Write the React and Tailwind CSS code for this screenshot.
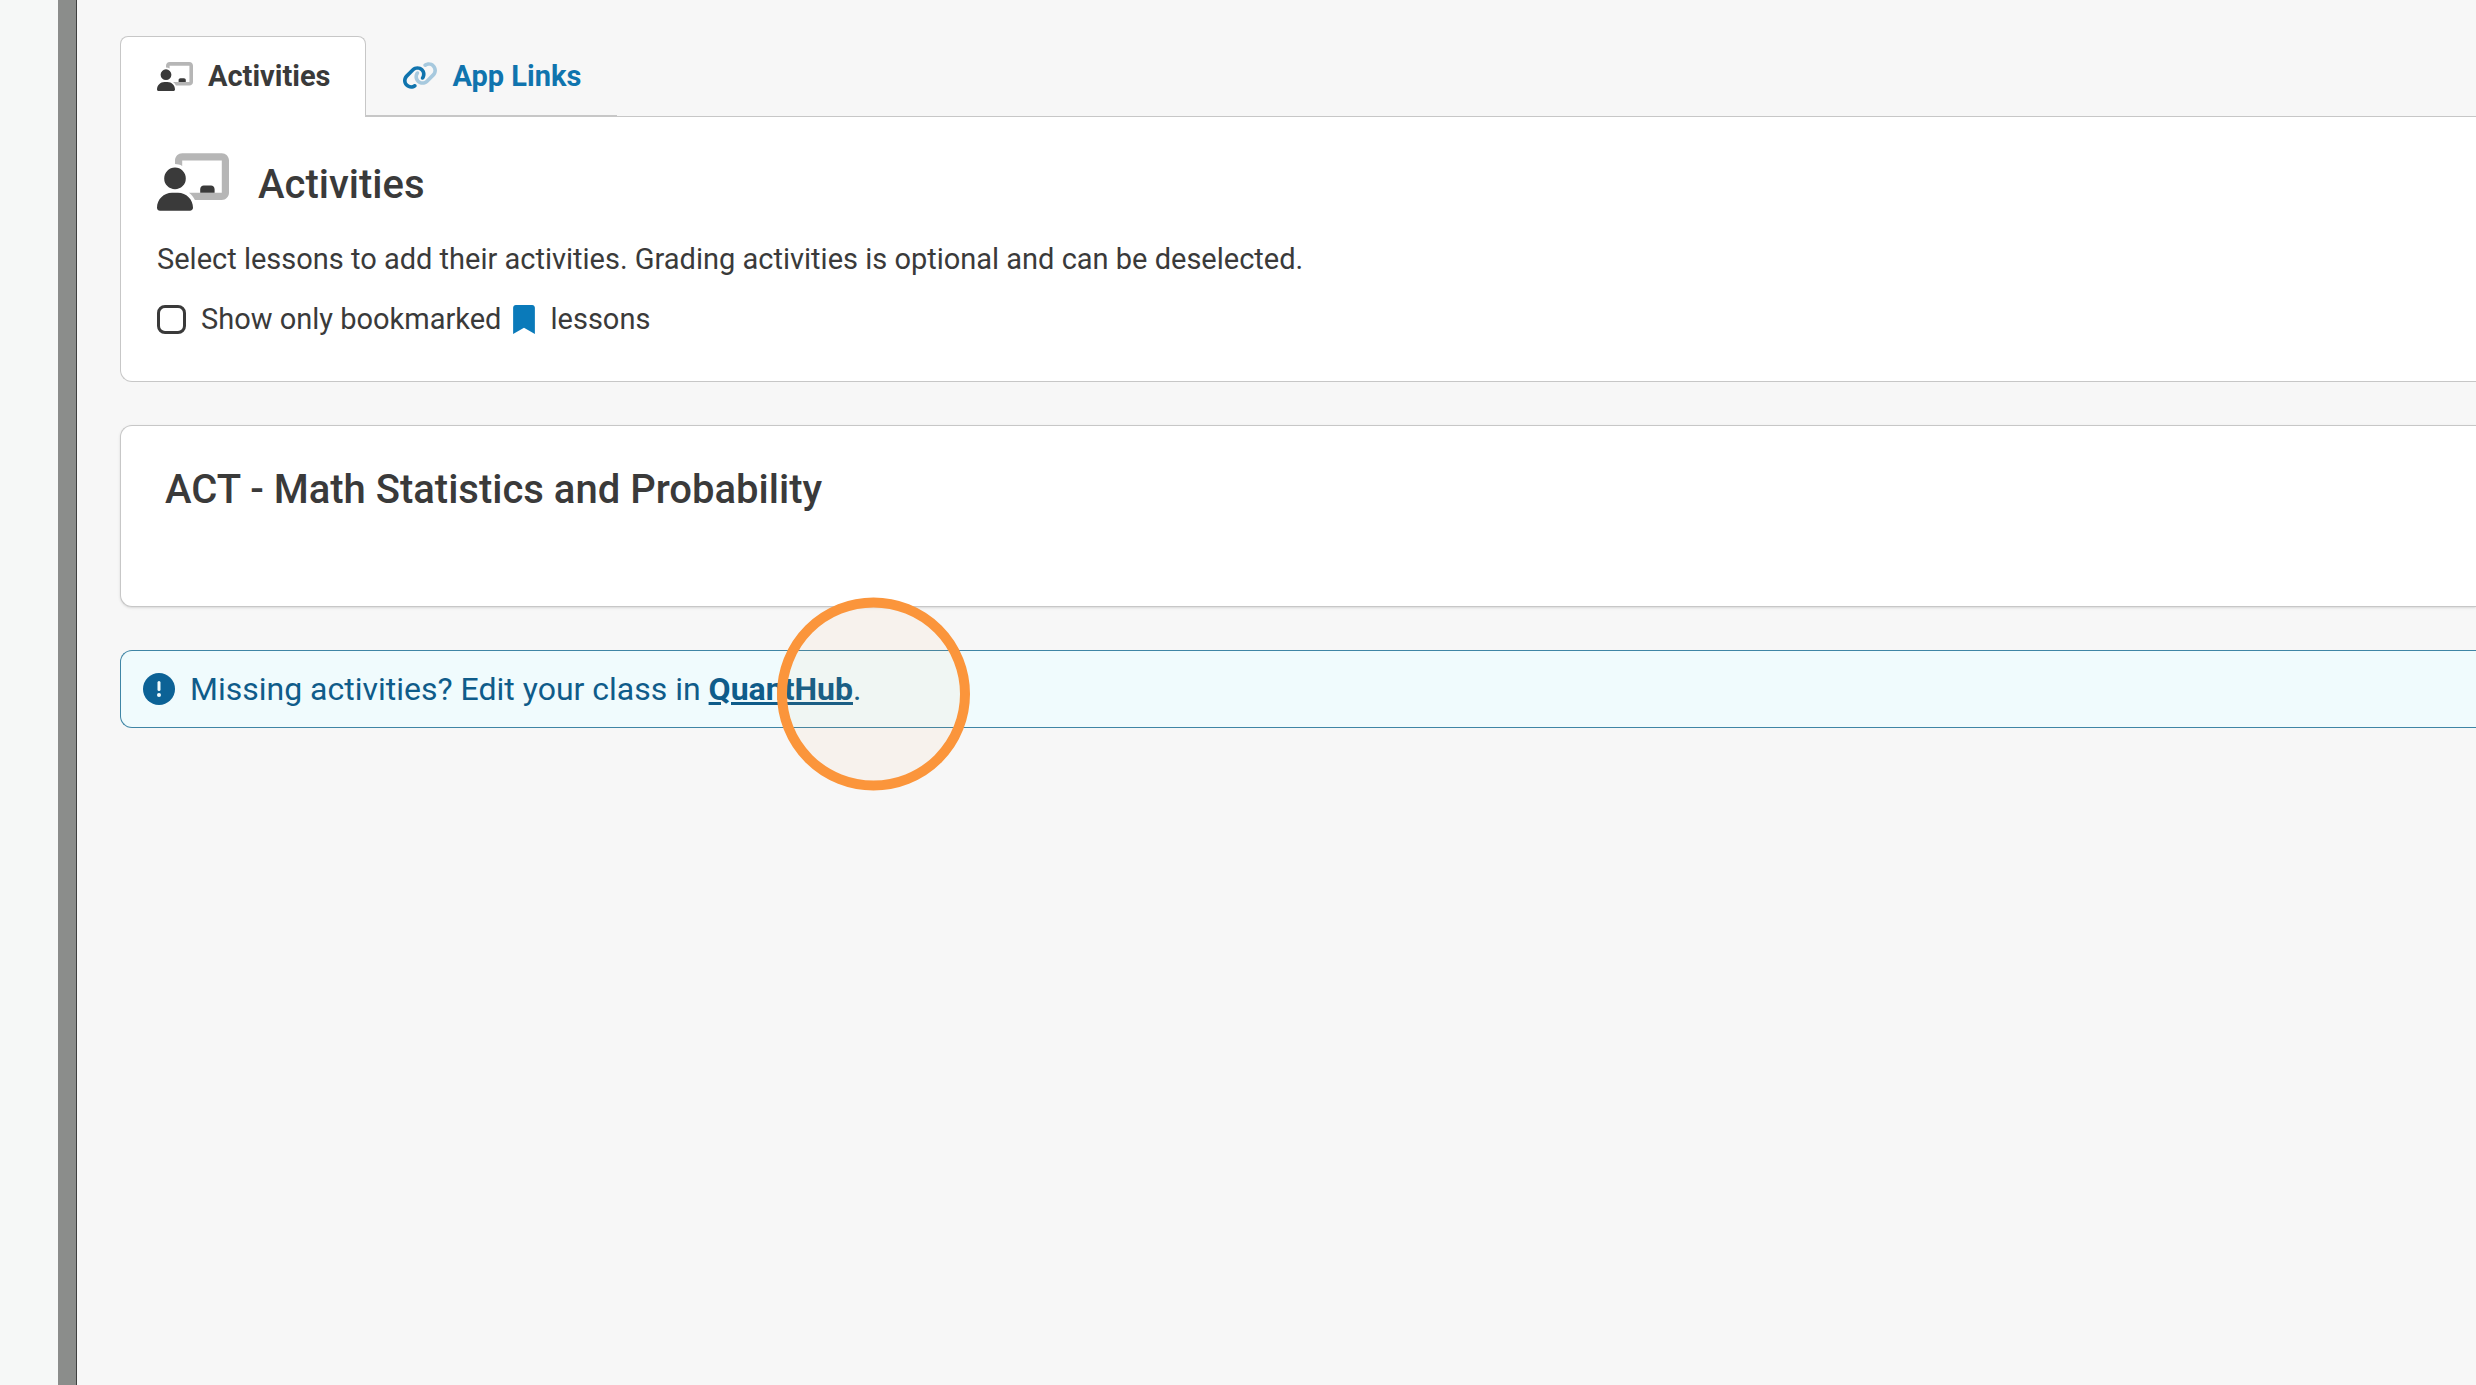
import React from 'react';

function ChalkboardIcon({ className }) {
  return (
    <svg className={className} viewBox="0 0 640 512" fill="currentColor" aria-hidden="true">
      <path
        opacity="0.37"
        d="M160 64c0-35.3 28.7-64 64-64L576 0c35.3 0 64 28.7 64 64l0 288c0 35.3-28.7 64-64 64l-239.2 0c-11.8-25.5-29.9-47.5-52.4-64l291.6 0 0-288L224 64l0 49.1C205.2 102.2 183.3 96 160 96z"
      />
      <path d="M384 352l0-32c0-17.7 14.3-32 32-32l64 0c17.7 0 32 14.3 32 32l0 32zM160 128a96 96 0 1 1 0 192 96 96 0 1 1 0-192zM133.3 352l53.4 0C260.3 352 320 411.7 320 485.3c0 14.7-11.9 26.7-26.7 26.7L26.7 512C11.9 512 0 500.1 0 485.3C0 411.7 59.7 352 133.3 352z" />
    </svg>
  );
}

function LinkIcon({ className }) {
  return (
    <svg className={className} viewBox="0 0 640 512" fill="currentColor" aria-hidden="true">
      <path
        opacity="0.35"
        d="M579.8 267.7c56.5-56.5 56.5-148 0-204.5c-50-50-128.8-56.5-186.3-15.4l-1.6 1.1c-14.4 10.3-17.7 30.3-7.4 44.6s30.3 17.7 44.6 7.4l1.6-1.1c32.1-22.9 76-19.3 103.8 8.6c31.5 31.5 31.5 82.5 0 114L422.3 334.8c-31.5 31.5-82.5 31.5-114 0c-27.9-27.9-31.5-71.8-8.6-103.8l1.1-1.6c10.3-14.4 6.9-34.4-7.4-44.6s-34.4-6.9-44.6 7.4l-1.1 1.6C206.5 251.2 213 330 263 380c56.5 56.5 148 56.5 204.5 0L579.8 267.7z"
      />
      <path d="M60.2 244.3c-56.5 56.5-56.5 148 0 204.5c50 50 128.8 56.5 186.3 15.4l1.6-1.1c14.4-10.3 17.7-30.3 7.4-44.6s-30.3-17.7-44.6-7.4l-1.6 1.1c-32.1 22.9-76 19.3-103.8-8.6C74 372 74 321 105.5 289.5L217.7 177.2c31.5-31.5 82.5-31.5 114 0c27.9 27.9 31.5 71.8 8.6 103.9l-1.1 1.6c-10.3 14.4-6.9 34.4 7.4 44.6s34.4 6.9 44.6-7.4l1.1-1.6C433.5 260.8 427 182 377 132c-56.5-56.5-148-56.5-204.5 0L60.2 244.3z" />
    </svg>
  );
}

function BookmarkIcon({ className }) {
  return (
    <svg className={className} viewBox="0 0 384 512" fill="currentColor" aria-label="bookmark">
      <path d="M0 512V48C0 21.5 21.5 0 48 0h288c26.5 0 48 21.5 48 48v464L192 400z" />
    </svg>
  );
}

function AlertIcon({ className }) {
  return (
    <svg className={className} viewBox="0 0 512 512" aria-hidden="true">
      <circle cx="256" cy="256" r="256" fill="currentColor" />
      <path d="M256 152v112" stroke="#f0fbfd" strokeWidth="48" strokeLinecap="round" />
      <circle cx="256" cy="352" r="32" fill="#f0fbfd" />
    </svg>
  );
}

function App() {
  return (
    <div className="flex min-h-screen overflow-hidden bg-[#f7f7f7] font-[Roboto,sans-serif] text-[#3a3a3a]">
      <div className="w-[58px] shrink-0 bg-[#f6f8f7]" />
      <div className="w-[19px] shrink-0 border-r border-[#3f403f] bg-[#8b8d8b]" />

      <main className="min-w-0 flex-1 pt-9 pl-[43px]">
        <div role="tablist" className="flex">
          <button
            role="tab"
            aria-selected="true"
            className="relative -mb-px flex h-[81px] items-center gap-[15px] rounded-t-lg border border-b-0 border-[#c7c7c7] bg-white pr-[34px] pb-[2px] pl-9 text-[29px] leading-9 font-bold"
          >
            <ChalkboardIcon className="h-[29px] w-9" />
            Activities
          </button>
          <button
            role="tab"
            aria-selected="false"
            className="flex h-20 items-center gap-[15px] border-b border-[#c7c7c7] px-9 text-[29px] leading-9 font-bold text-[#1074ae]"
          >
            <LinkIcon className="h-[29px] w-9" />
            App Links
          </button>
        </div>

        <section className="rounded-bl-xl border-y border-l border-[#c7c7c7] bg-white px-9 pt-9 pb-[42px]">
          <div className="flex items-start gap-[29px]">
            <ChalkboardIcon className="h-[58px] w-[72px]" />
            <h1 className="text-[40px] leading-16 font-medium">Activities</h1>
          </div>
          <p className="mt-[22px] text-[29px] leading-10">
            Select lessons to add their activities. Grading activities is optional and can be deselected.
          </p>
          <label className="mt-5 flex items-center text-[29px] leading-10">
            <input
              type="checkbox"
              className="mr-[15px] size-[29px] appearance-none rounded-lg border-3 border-[#3a3a3a] bg-white checked:bg-[#1074ae]"
            />
            Show only bookmarked
            <BookmarkIcon className="mr-[15px] ml-3 h-[29px] w-[22px] text-[#0a7aba]" />
            lessons
          </label>
        </section>

        <section className="mt-[43px] h-[182px] rounded-l-xl border-y border-l border-[#c7c7c7] bg-white px-11 pt-8 shadow-sm">
          <h2 className="text-[40px] leading-16 font-medium">ACT - Math Statistics and Probability</h2>
        </section>

        <div
          role="alert"
          className="mt-[43px] flex h-[78px] items-center gap-[15px] rounded-l-xl border-y border-l border-[#3f85a5] bg-[#f0fbfd] px-[22px] text-[32px] leading-10 text-[#0f5c8a]"
        >
          <AlertIcon className="size-8 text-[#0c6296]" />
          <p>
            Missing activities? Edit your class in{' '}
            <span className="relative">
              <a href="#quanthub" className="font-bold underline">
                QuantHub
              </a>
              {/* click highlight */}
              <span className="pointer-events-none absolute top-6 left-[68px] size-[193px] -translate-y-1/2 rounded-full border-10 border-[#fb953b] bg-[#fb953b]/5" />
            </span>
            .
          </p>
        </div>
      </main>
    </div>
  );
}

export default App;
